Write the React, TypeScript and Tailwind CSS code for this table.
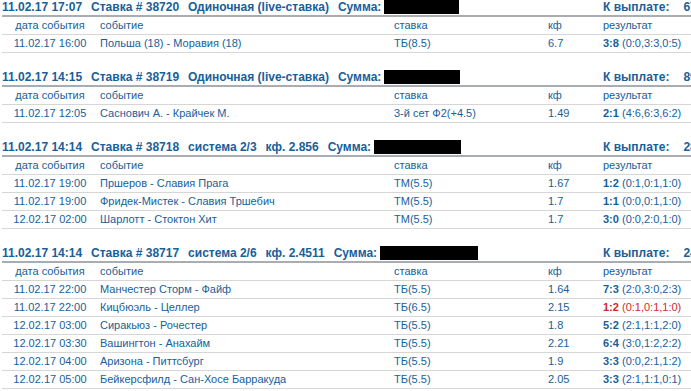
type Row = {
  date: string;
  event: string;
  bet: string;
  kf: string;
  score: string;
  sets: string;
  lost?: boolean;
};

type Bet = {
  created: string;
  id: string;
  kind: string[];
  maskWidth: number;
  payout: string;
  rows: Row[];
};

const bets: Bet[] = [
  {
    created: "11.02.17 17:07",
    id: "38720",
    kind: ["Одиночная (live-ставка)"],
    maskWidth: 75,
    payout: "67.00",
    rows: [
      { date: "11.02.17 16:00", event: "Польша (18) - Моравия (18)", bet: "ТБ(8.5)", kf: "6.7", score: "3:8", sets: "(0:0,3:3,0:5)" },
    ],
  },
  {
    created: "11.02.17 14:15",
    id: "38719",
    kind: ["Одиночная (live-ставка)"],
    maskWidth: 76,
    payout: "89.40",
    rows: [
      { date: "11.02.17 12:05", event: "Саснович А. - Крайчек М.", bet: "3-й сет Ф2(+4.5)", kf: "1.49", score: "2:1", sets: "(4:6,6:3,6:2)" },
    ],
  },
  {
    created: "11.02.17 14:14",
    id: "38718",
    kind: ["система 2/3", "кф. 2.856"],
    maskWidth: 87,
    payout: "28.56",
    rows: [
      { date: "11.02.17 19:00", event: "Пршеров - Славия Прага", bet: "ТМ(5.5)", kf: "1.67", score: "1:2", sets: "(0:1,0:1,1:0)" },
      { date: "11.02.17 19:00", event: "Фридек-Мистек - Славия Тршебич", bet: "ТМ(5.5)", kf: "1.7", score: "1:1", sets: "(0:0,0:1,1:0)" },
      { date: "12.02.17 02:00", event: "Шарлотт - Стоктон Хит", bet: "ТМ(5.5)", kf: "1.7", score: "3:0", sets: "(0:0,2:0,1:0)" },
    ],
  },
  {
    created: "11.02.17 14:14",
    id: "38717",
    kind: ["система 2/6", "кф. 2.4511"],
    maskWidth: 98,
    payout: "24.51",
    rows: [
      { date: "11.02.17 22:00", event: "Манчестер Сторм - Файф", bet: "ТБ(5.5)", kf: "1.64", score: "7:3", sets: "(2:0,3:0,2:3)" },
      { date: "11.02.17 22:00", event: "Кицбюэль - Целлер", bet: "ТБ(6.5)", kf: "2.15", score: "1:2", sets: "(0:1,0:1,1:0)", lost: true },
      { date: "12.02.17 03:00", event: "Сиракьюз - Рочестер", bet: "ТБ(5.5)", kf: "1.8", score: "5:2", sets: "(2:1,1:1,2:0)" },
      { date: "12.02.17 03:30", event: "Вашингтон - Анахайм", bet: "ТБ(5.5)", kf: "2.21", score: "6:4", sets: "(3:0,1:2,2:2)" },
      { date: "12.02.17 04:00", event: "Аризона - Питтсбург", bet: "ТБ(5.5)", kf: "1.9", score: "3:3", sets: "(0:0,2:1,1:2)" },
      { date: "12.02.17 05:00", event: "Бейкерсфилд - Сан-Хосе Барракуда", bet: "ТБ(5.5)", kf: "2.05", score: "3:3", sets: "(2:1,1:1,0:1)" },
    ],
  },
];

const cols = "grid grid-cols-[96px_294px_154px_55px_1fr]";

function BetTable({ bet }: { bet: Bet }) {
  return (
    <div className="mb-[17px]">
      <div className="flex h-[17px] items-center border-b-2 border-[#a9adb1] pb-[2px] text-[12px] font-bold whitespace-nowrap">
        <div className="flex w-[601px] shrink-0 items-center gap-[9px]">
          <span>{bet.created}</span>
          <span>Ставка # {bet.id}</span>
          {bet.kind.map((part) => (
            <span key={part}>{part}</span>
          ))}
          <span className="flex items-center">
            Сумма:
            <span className="ml-[3px] inline-block h-[14px] bg-black" style={{ width: bet.maskWidth }} />
          </span>
        </div>
        {/* payout runs past the right edge, as on the page */}
        <div className="flex items-center">
          <span>К выплате:</span>
          <span className="ml-[14px]">{bet.payout}</span>
        </div>
      </div>

      <div className={`${cols} h-[18px] items-center border-b border-[#d6d6d6]`}>
        <div className="text-center">дата события</div>
        <div className="pl-[2px]">событие</div>
        <div className="pl-[2px]">ставка</div>
        <div className="pl-[2px]">кф</div>
        <div className="pl-[2px]">результат</div>
      </div>

      {bet.rows.map((row, i) => (
        <div key={i} className={`${cols} h-[18px] items-center border-b border-[#d6d6d6] whitespace-nowrap`}>
          <div className="text-center">{row.date}</div>
          <div className="pl-[2px]">{row.event}</div>
          <div className="pl-[2px]">{row.bet}</div>
          <div className="pl-[2px]">{row.kf}</div>
          <div className={row.lost ? "pl-[2px] text-[#cf2a2a]" : "pl-[2px]"}>
            <span className="font-bold">{row.score}</span> {row.sets}
          </div>
        </div>
      ))}
    </div>
  );
}

export default function App() {
  return (
    <div className="h-[391px] w-[691px] overflow-hidden bg-white pl-[2px] font-['Liberation_Sans',Arial,sans-serif] text-[11px] leading-none text-[#17609a]">
      {bets.map((bet) => (
        <BetTable key={bet.id} bet={bet} />
      ))}
    </div>
  );
}
